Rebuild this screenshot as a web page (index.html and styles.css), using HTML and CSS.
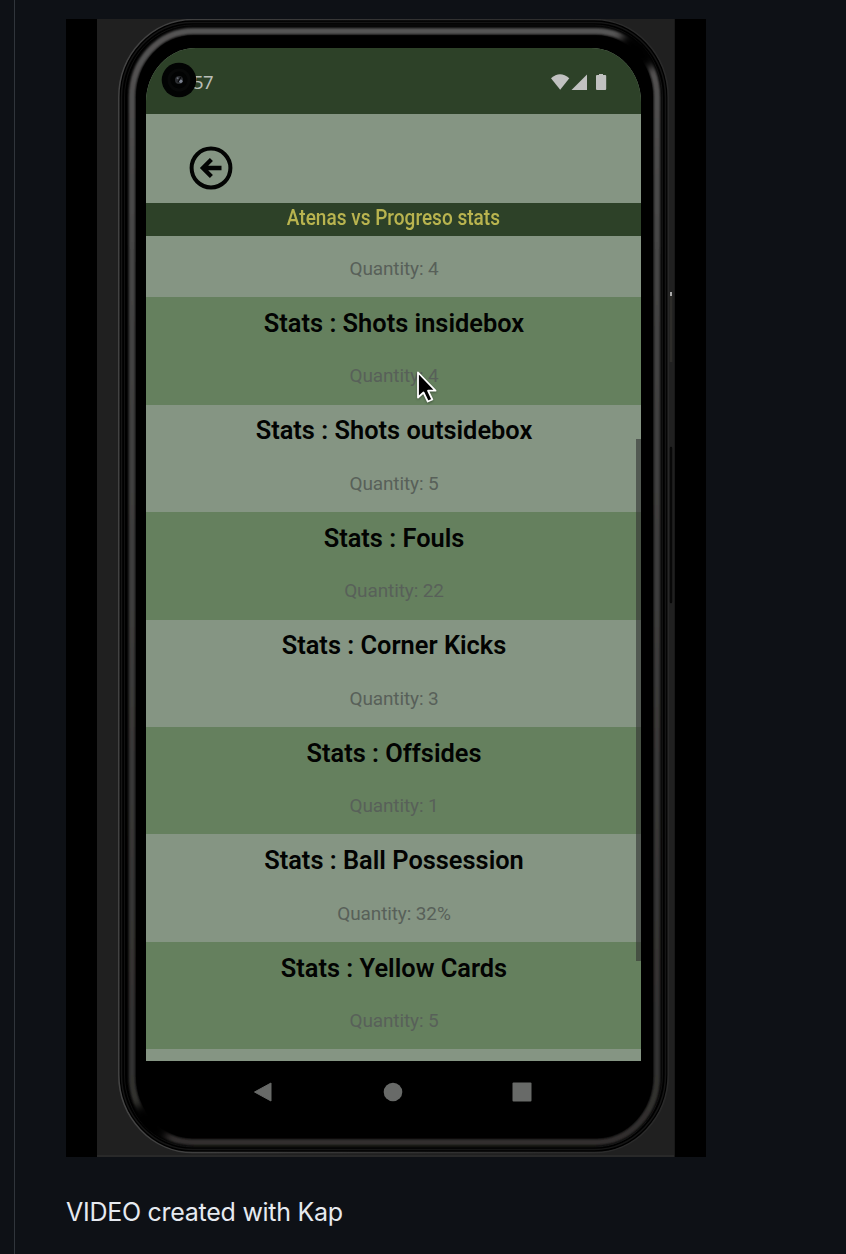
FILE: index.html
```
<!DOCTYPE html>
<html lang="en">
<head>
<meta charset="utf-8">
<title>Atenas vs Progreso stats</title>
<link rel="stylesheet" href="styles.css">
</head>
<body>
<main class="readme">
  <section class="media">
    <svg class="frame" viewBox="66 19 640 1138" width="640" height="1138" aria-hidden="true">
      <defs>
        <linearGradient id="rim" x1="0" y1="0" x2="0" y2="1">
          <stop offset="0" stop-color="#555454"/>
          <stop offset=".2" stop-color="#454545"/>
          <stop offset="1" stop-color="#302f2e"/>
        </linearGradient>
        <linearGradient id="edge" x1="0" y1="0" x2="1" y2="0">
          <stop offset="0" stop-color="#444"/>
          <stop offset=".5" stop-color="#333"/>
          <stop offset="1" stop-color="#292929"/>
        </linearGradient>
        <clipPath id="body"><rect x="124.500" y="25" width="538" height="1122" rx="68" ry="72"/></clipPath>
        <filter id="soft" x="-5%" y="-5%" width="110%" height="110%"><feGaussianBlur stdDeviation=".8"/></filter>
        <filter id="shade" x="-60%" y="-100%" width="220%" height="300%"><feGaussianBlur stdDeviation="4"/></filter>
      </defs>
      <rect x="97" y="19" width="578" height="1138" fill="#202020"/>
      <path d="M97 1156H675" stroke="#292929" stroke-width="2"/>
      <path d="M674.5 19V1157" stroke="#191919"/>
      <rect x="118.8" y="19.5" width="549.4" height="1133" rx="74" ry="78" fill="#000" stroke="url(#edge)" stroke-width="1.5"/>
      <rect x="121.5" y="22.5" width="544" height="1127" rx="71" ry="75" fill="none" stroke="#151515" stroke-width="1.5"/>
      <rect x="124.5" y="25" width="538" height="1122" rx="68" ry="72" fill="#000" stroke="#111" stroke-width="1"/>
      <rect x="132" y="31.2" width="525" height="1111" rx="61" ry="66" fill="none" stroke="url(#rim)" stroke-width="6.6" filter="url(#soft)"/>
      <g clip-path="url(#body)">
        <ellipse cx="638" cy="51" rx="22" ry="13" transform="rotate(45 638 51)" fill="#000" filter="url(#shade)"/>
        <ellipse cx="150" cy="1123" rx="22" ry="13" transform="rotate(45 150 1123)" fill="#000" filter="url(#shade)"/>
      </g>
      <rect x="136" y="35.3" width="517" height="1103" rx="57" ry="62" fill="#000"/>
      <path d="M671 294V362" stroke="#2d2c29" stroke-width="2.5"/>
      <rect x="670" y="292" width="2" height="4" fill="#aaa"/>
      <path d="M671 448V602" stroke="#080808" stroke-width="2.4" stroke-linecap="round"/>
    </svg>
    <div class="phone">
      <div class="screen">
        <header class="status">
          <svg class="camera" viewBox="0 0 36 36" width="36" height="36">
            <circle cx="18" cy="18" r="17.3" fill="#020303"/>
            <circle cx="18" cy="18" r="10" fill="none" stroke="#070808" stroke-width="3"/>
            <circle cx="18" cy="18" r="4" fill="#2b2d31"/>
            <circle cx="19.8" cy="19.3" r="1.7" fill="#7b8290"/>
            <circle cx="16.6" cy="16.2" r="1" fill="#656a73"/>
            <path d="M17 20l3-5" stroke="#08090b" stroke-width="1.2"/>
          </svg>
          <span class="time">57</span>
          <svg class="signals" viewBox="551 73 56 18" width="56" height="18" fill="#c1c1c1">
            <path d="M551 78.2Q560 70.5 569.3 78.2L560.2 89.8Z"/>
            <path d="M571.5 90L587 74.5V90Z"/>
            <path d="M599 75V74h4v1h2.200q1 0 1 1V89q0 1-1 1H597q-1 0-1-1V76q0-1 1-1Z"/>
          </svg>
        </header>
        <nav class="toolbar">
          <svg viewBox="0 0 44 44" width="44" height="44" fill="none" stroke="#030403" stroke-width="4">
            <circle cx="22" cy="22" r="19.4"/>
            <path d="M32.500 22H14M22.400 13.500L13.900 22L22.400 30.500" stroke-width="4.300"/>
          </svg>
        </nav>
        <h1 class="match"><span>Atenas vs Progreso stats</span></h1>
        <div class="list">
          <div class="first"><p class="qty">Quantity: 4</p></div>
          <div class="row green"><h2>Stats : Shots insidebox</h2><p class="qty">Quantity: 4</p></div>
          <div class="row"><h2>Stats : Shots outsidebox</h2><p class="qty">Quantity: 5</p></div>
          <div class="row green"><h2>Stats : Fouls</h2><p class="qty">Quantity: 22</p></div>
          <div class="row"><h2>Stats : Corner Kicks</h2><p class="qty">Quantity: 3</p></div>
          <div class="row green"><h2>Stats : Offsides</h2><p class="qty">Quantity: 1</p></div>
          <div class="row"><h2>Stats : Ball Possession</h2><p class="qty">Quantity: 32%</p></div>
          <div class="row green"><h2>Stats : Yellow Cards</h2><p class="qty">Quantity: 5</p></div>
          <i class="scrollbar"></i>
          <svg class="cursor" viewBox="0 0 24 34" width="24" height="34">
            <path d="M3 2.500V27.500L8.500 22.500L12.800 31.500L17.300 29.500L13 20.700H20.500Z" fill="#000" stroke="#fff" stroke-width="1.8" stroke-linejoin="round"/>
          </svg>
        </div>
      </div>
      <footer class="keys">
        <svg viewBox="0 0 20 22" width="20" height="22"><path d="M1.500 11L18 2V20Z" fill="#686a68" stroke="#686a68" stroke-linejoin="round"/></svg>
        <svg viewBox="0 0 20 20" width="20" height="20"><circle cx="10" cy="10" r="9.300" fill="#686a68"/></svg>
        <svg viewBox="0 0 20 20" width="20" height="20"><rect x=".5" y=".5" width="19" height="19" rx="1" fill="#686a68"/></svg>
      </footer>
    </div>
  </section>
  <p class="caption">VIDEO created with Kap</p>
</main>
</body>
</html>
```
FILE: styles.css
```
* { box-sizing: border-box; }
body { margin: 0; background: #0e1116; overflow: hidden; }
h1, h2, p { margin: 0; }
svg { display: block; flex: none; }
.readme {
  height: 1254px;
  margin-left: 14px;
  padding: 19px 0 0 51px;
  border-left: 1px solid #30353b;
}
.media { display: grid; width: 640px; height: 1138px; background: #000; }
.frame, .phone { grid-area: 1 / 1; }
.phone { position: relative; width: 495px; margin: 28.5px 0 0 80px; font-family: Roboto, sans-serif; }
.screen {
  display: flex;
  flex-direction: column;
  height: 1013.5px;
  overflow: hidden;
  background: #859583;
  border-radius: 50px 50px 0 0 / 54px 54px 0 0;
}
.status { display: flex; height: 66px; padding: 14px 34px 0 15px; background: #2d4128; }
.time { margin: 8px 0 0 -4px; color: #b9beb8; font: 18.5px/24px "Noto Sans", sans-serif; letter-spacing: -.6px; }
.camera { position: relative; z-index: 1; }
.signals { margin: 11.5px 0 0 auto; }
.toolbar { height: 89px; padding: 32.5px 0 0 43.4px; }
.match {
  height: 33px;
  background: #2d4128;
  color: #b9b44f;
  font-size: 21.5px;
  font-weight: 500;
  line-height: 30px;
  text-align: center;
}
.match span { display: inline-block; transform: scaleX(.885); }
.list { position: relative; flex: 1; text-align: center; }
.first { height: 61.800px; padding-top: 20px; }
.row { height: 107.430px; padding-top: 9.7px; }
.green { background: #65805e; }
.row h2 { height: 56.500px; padding-left: 1px; color: #020302; font-size: 25.4px; font-weight: 600; line-height: 33px; }
.qty { padding-left: 1px; color: #586059; font-size: 19px; line-height: 26px; letter-spacing: -.12px; }
.scrollbar { position: absolute; top: 203px; right: 0; width: 5px; height: 522px; background: rgba(52, 52, 52, .62); }
.cursor { position: absolute; left: 269px; top: 134px; filter: drop-shadow(0 1px 1px rgba(0, 0, 0, .35)); }
.keys { display: flex; align-items: center; justify-content: space-between; height: 61px; padding: 0 109px 0 107px; }
.caption { margin-top: 38px; color: #e6eaf0; font: 400 25px/34px Inter, sans-serif; letter-spacing: -.27px; }
```
